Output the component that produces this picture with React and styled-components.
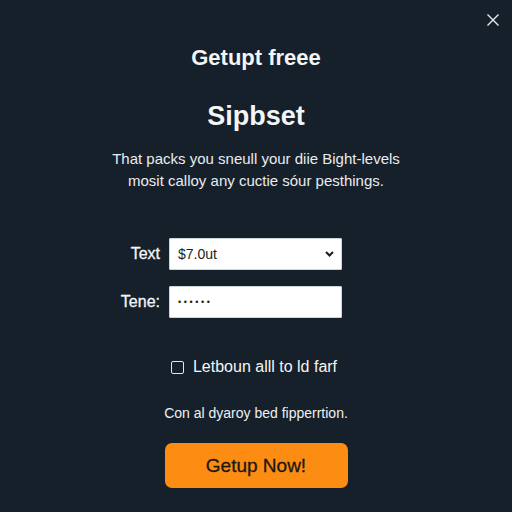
import styled, { createGlobalStyle } from 'styled-components';

const GlobalStyle = createGlobalStyle`
  html, body {
    margin: 0;
    padding: 0;
    background: #16202a;
  }
  * {
    box-sizing: border-box;
  }
`;

const StyledModal = styled.div`
  position: relative;
  width: 512px;
  height: 512px;
  background: #16202a;
  color: #f4f5f6;
  font-family: 'Liberation Sans', Arial, sans-serif;
  display: flex;
  flex-direction: column;
  align-items: center;
`;

const StyledClose = styled.button`
  position: absolute;
  top: 12px;
  right: 11px;
  width: 16px;
  height: 16px;
  padding: 0;
  border: none;
  background: transparent;
  cursor: pointer;
  & svg {
    display: block;
  }
`;

const StyledTitle = styled.h1`
  margin: 46px 0 0;
  font-size: 22px;
  line-height: 24px;
  font-weight: 700;
`;

const StyledHeading = styled.h2`
  margin: 30px 0 0;
  font-size: 27px;
  line-height: 32px;
  font-weight: 700;
`;

const StyledIntro = styled.p`
  margin: 16px 0 0;
  font-size: 15px;
  line-height: 22px;
  text-align: center;
  color: #e9ecef;
`;

const StyledForm = styled.form`
  align-self: flex-start;
  margin: 46px 0 0 100px;
  display: grid;
  grid-template-columns: 60px 173px;
  column-gap: 9px;
  row-gap: 16px;
  align-items: center;
`;

const StyledLabel = styled.label`
  text-align: right;
  font-size: 16px;
  color: #f4f5f6;
  -webkit-text-stroke: 0.3px #f4f5f6;
`;

const StyledField = styled.div`
  position: relative;
  height: 32px;
  background: #ffffff;
  border: 1px solid #cfd4d9;
  border-radius: 1px;
  display: flex;
  align-items: center;
  padding: 0 8px;
  color: #1a1d21;
  font-size: ${props => (props.$secret ? '9px' : '14px')};
  letter-spacing: ${props => (props.$secret ? '2.6px' : '0')};
`;

const StyledCaret = styled.svg`
  position: absolute;
  right: 7px;
  top: 12px;
`;

const StyledCheckRow = styled.label`
  margin-top: 40px;
  margin-left: -4px;
  display: flex;
  align-items: center;
  gap: 9px;
  font-size: 16px;
  color: #f4f5f6;
`;

const StyledBox = styled.span`
  width: 13px;
  height: 13px;
  border: 1.5px solid #e4e7ea;
  border-radius: 2px;
`;

const StyledNote = styled.p`
  margin: 29px 0 0;
  font-size: 14px;
  color: #eef0f2;
`;

const StyledButton = styled.button`
  margin-top: 22px;
  width: 183px;
  height: 45px;
  border: none;
  border-radius: 7px;
  background: #fd8c12;
  color: #1b1712;
  font-family: 'Liberation Sans', Arial, sans-serif;
  font-size: 19px;
  -webkit-text-stroke: 0.3px #1b1712;
  cursor: pointer;
`;

const App = () => {
  return (
    <StyledModal>
      <GlobalStyle />
      <StyledClose aria-label="close">
        <svg width="16" height="16" viewBox="0 0 16 16">
          <path d="M2.5 2.5 L13.5 13.5 M13.5 2.5 L2.5 13.5" stroke="#e8ebee" strokeWidth="1.4" />
        </svg>
      </StyledClose>
      <StyledTitle>Getupt freee</StyledTitle>
      <StyledHeading>Sipbset</StyledHeading>
      <StyledIntro>
        That packs you sneull your diie Bight-levels
        <br />
        mosit calloy any cuctie sóur pesthings.
      </StyledIntro>
      <StyledForm>
        <StyledLabel>Text</StyledLabel>
        <StyledField>
          $7.0ut
          <StyledCaret width="9" height="6" viewBox="0 0 9 6">
            <path d="M1 1 L4.5 4.5 L8 1" fill="none" stroke="#1a1d21" strokeWidth="2" />
          </StyledCaret>
        </StyledField>
        <StyledLabel>Tene:</StyledLabel>
        <StyledField $secret>••••••</StyledField>
      </StyledForm>
      <StyledCheckRow>
        <StyledBox />
        Letboun alll to ld farf
      </StyledCheckRow>
      <StyledNote>Con al dyaroy bed fipperrtion.</StyledNote>
      <StyledButton>Getup Now!</StyledButton>
    </StyledModal>
  );
};

export default App;
